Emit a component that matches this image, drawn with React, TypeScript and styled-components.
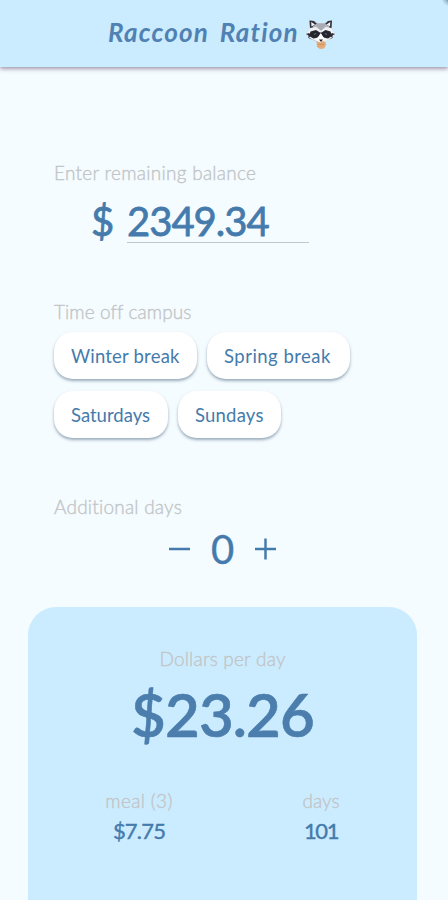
import React, { useState } from 'react';
import styled, { createGlobalStyle } from 'styled-components';

const GlobalStyle = createGlobalStyle`
  * { box-sizing: border-box; }
  body { margin: 0; background: #f5fcff; font-family: Lato, sans-serif; color: #457bac; }
  button, input { font: inherit; color: inherit; border: 0; padding: 0; margin: 0; background: none; }
  button { cursor: pointer; }
`;

const Page = styled.div`
  width: 448px;
  height: 900px;
  overflow: hidden;
  display: flex;
  flex-direction: column;
`;

const Header = styled.header`
  flex: none;
  height: 67px;
  padding-left: 108px;
  display: flex;
  align-items: flex-start;
  background: radial-gradient(circle at 451px -3px, #4d6479 2px, #9db9cd 6px, #cbecff 10px);
  box-shadow: 0 2px 4px rgba(80, 60, 90, 0.5);
`;

const Title = styled.h1`
  margin: 17px 0 0;
  width: 196px;
  font-size: 26px;
  line-height: 30px;
  font-weight: 700;
  font-style: italic;
  letter-spacing: 1.15px;
  word-spacing: 4px;
  white-space: nowrap;
  color: #5081b2;
`;

const RaccoonIcon = styled.svg`
  flex: none;
  margin: 19px 0 0 1px;
  width: 31px;
  height: 31px;
`;

const Form = styled.main`
  flex: none;
  height: 539.5px;
  padding: 94px 54px 0;
`;

const Section = styled.section<{ $height: number }>`
  height: ${(p) => p.$height}px;
`;

const Label = styled.div<{ $spacing?: number; $center?: boolean }>`
  font-size: 19px;
  line-height: 24px;
  font-weight: 300;
  white-space: nowrap;
  letter-spacing: ${(p) => p.$spacing ?? 0}px;
  text-align: ${(p) => (p.$center ? 'center' : 'left')};
  color: #c2c5c7;
  -webkit-text-stroke: 0.35px #c2c5c7;
`;

const Balance = styled.div`
  display: flex;
  margin: 11px 0 0 37px;
  font-size: 40px;
  line-height: 51px;
  -webkit-text-stroke: 0.8px currentColor;
`;

const Currency = styled.span`
  width: 36px;
`;

const BalanceInput = styled.input`
  width: 182px;
  height: 47px;
  padding-top: 5px;
  border-bottom: 1px solid #c3c7cb;
  letter-spacing: -1px;
  outline: none;
`;

const Chips = styled.div`
  display: flex;
  flex-wrap: wrap;
  gap: 12px 10px;
  margin-top: 8px;
`;

const Chip = styled.button<{ $width: number; $spacing: number }>`
  width: ${(p) => p.$width}px;
  height: 47px;
  padding-left: 17px;
  border-radius: 19px;
  background: ${(p) => (p['aria-pressed'] ? '#cbecff' : '#fff')};
  box-shadow: 0 2px 3px rgba(62, 94, 122, 0.5);
  font-size: 18.5px;
  text-align: left;
  white-space: nowrap;
  letter-spacing: ${(p) => p.$spacing}px;
`;

const Stepper = styled.div`
  display: flex;
  align-items: center;
  gap: 21px;
  height: 48px;
  margin: 6px 0 0 115px;
`;

const StepButton = styled.button`
  width: 21px;
  height: 22px;
  svg { display: block; width: 21px; height: 22px; }
`;

const Count = styled.span`
  width: 23px;
  text-align: center;
  font-size: 40px;
  line-height: 48px;
  -webkit-text-stroke: 0.4px currentColor;
`;

const Summary = styled.section`
  flex: 1;
  margin: 0 31px 0 28px;
  padding-top: 40px;
  border-radius: 28px 28px 0 0;
  background: #cbecff;
`;

const DailyAmount = styled.div`
  margin-top: 7px;
  text-align: center;
  font-size: 60px;
  line-height: 72px;
  font-weight: 600;
  letter-spacing: -0.9px;
  color: #4b7dad;
  -webkit-text-stroke: 0.6px currentColor;
`;

const Stats = styled.div`
  display: flex;
  justify-content: space-between;
  padding: 0 56px 0 71px;
  margin-top: 39px;
`;

const Stat = styled.div`
  width: 80px;
  display: flex;
  flex-direction: column;
  align-items: center;
`;

const StatValue = styled.div<{ $spacing: number }>`
  margin-top: 5px;
  font-size: 22px;
  line-height: 26px;
  letter-spacing: ${(p) => p.$spacing}px;
  -webkit-text-stroke: 0.4px currentColor;
`;

const breaks = [
  { name: 'Winter break', width: 143, spacing: 0.2 },
  { name: 'Spring break', width: 143, spacing: 0.48 },
  { name: 'Saturdays', width: 114, spacing: 0 },
  { name: 'Sundays', width: 103, spacing: 0.2 },
];

function Raccoon() {
  return (
    <RaccoonIcon viewBox="0 0 31 31" aria-label="Raccoon">
      <path d="M5 9 4.500 1.500 9 2l3 2h8l3-2 4-.5L26.500 9l3.500 6-2.500 1.500v2.500l-4.500 2-4 2h-7l-4-2-4.500-2v-2.500L1 15Z" fill="#b7b9c1" />
      <path d="m5 9-.5-7.500L9 2l3 3-4 2-.500 3Zm21.500 0 .5-7.500-4 .5-3 3 4 2 .5 3Z" fill="#34313a" />
      <path d="m6.500 7.500-.3-4.500L10 5.500Zm18.500 0 .3-4.500L21.500 5.500Z" fill="#f2f4f7" />
      <path d="m5 9 6-1 4 3h2l4-3 5.500 1 3.500 6-2.500 1.500v2.500l-4.500 2-4 2h-6l-4-2-4.500-2v-2.500L1 15Z" fill="#eef0f4" />
      <path d="M10 5h12l-3 3-3 4-3-4Z" fill="#a9abb4" />
      <path d="M1 15l3-1 2 2-2 2.500 3 2-3.500-1.500v-2.500Zm29 0-3-1-2 2 2 2.500-3 2 3.500-1.500v-2.500Z" fill="#34313a" />
      <path d="m4 17 1.500-4.500 5.500-1.500 4 2.500h1.500l4-2.500 5 1.500L27 17l-4 2.500-4.500-1-2.200-3.500h-1l-2.300 3.500-4.500 1Z" fill="#262630" />
      <path d="m9 15.500 2-1m9 0 2 1" stroke="#747782" strokeWidth=".9" />
      <path d="m14 17 1.700-3 1.700 3 2.600 3-3 3h-3l-3-3Z" fill="#fff" />
      <path d="M14 20.500h4L16 23Z" fill="#29262c" />
      <path d="m11.500 23 2-.5 2 1 2-1.500 3 1 .5 3-2 3.500-4 .5-3-2Z" fill="#e3ab78" />
      <path d="m13 25 2 1 2-1 2 1" stroke="#c68b5d" strokeWidth=".8" fill="none" />
    </RaccoonIcon>
  );
}

export default function App() {
  const [balance, setBalance] = useState('2349.34');
  const [extra, setExtra] = useState(0);
  const [selected, setSelected] = useState<string[]>([]);
  const toggle = (name: string) =>
    setSelected((s) => (s.includes(name) ? s.filter((n) => n !== name) : [...s, name]));

  return (
    <Page>
      <GlobalStyle />
      <Header>
        <Title>Raccoon Ration</Title>
        <Raccoon />
      </Header>
      <Form>
        <Section $height={139}>
          <Label $spacing={0.28}>Enter remaining balance</Label>
          <Balance>
            <Currency>$</Currency>
            <BalanceInput value={balance} onChange={(e) => setBalance(e.target.value)} />
          </Balance>
        </Section>
        <Section $height={195}>
          <Label $spacing={0.08}>Time off campus</Label>
          <Chips>
            {breaks.map((b) => (
              <Chip
                key={b.name}
                $width={b.width}
                $spacing={b.spacing}
                aria-pressed={selected.includes(b.name)}
                onClick={() => toggle(b.name)}
              >
                {b.name}
              </Chip>
            ))}
          </Chips>
        </Section>
        <Section $height={90}>
          <Label $spacing={0.22}>Additional days</Label>
          <Stepper>
            <StepButton aria-label="Fewer days" onClick={() => setExtra(Math.max(0, extra - 1))}>
              <svg viewBox="0 0 21 22"><path d="M0 11h21" stroke="currentColor" strokeWidth="2.500" /></svg>
            </StepButton>
            <Count>{extra}</Count>
            <StepButton aria-label="More days" onClick={() => setExtra(extra + 1)}>
              <svg viewBox="0 0 21 22"><path d="M0 11h21M10.500 0.500v21" stroke="currentColor" strokeWidth="2.500" /></svg>
            </StepButton>
          </Stepper>
        </Section>
      </Form>
      <Summary>
        <Label $center $spacing={0.2}>Dollars per day</Label>
        <DailyAmount>$23.26</DailyAmount>
        <Stats>
          <Stat>
            <Label $spacing={0.35}>meal (3)</Label>
            <StatValue $spacing={-0.8}>$7.75</StatValue>
          </Stat>
          <Stat>
            <Label>days</Label>
            <StatValue $spacing={-1.500}>101</StatValue>
          </Stat>
        </Stats>
      </Summary>
    </Page>
  );
}
